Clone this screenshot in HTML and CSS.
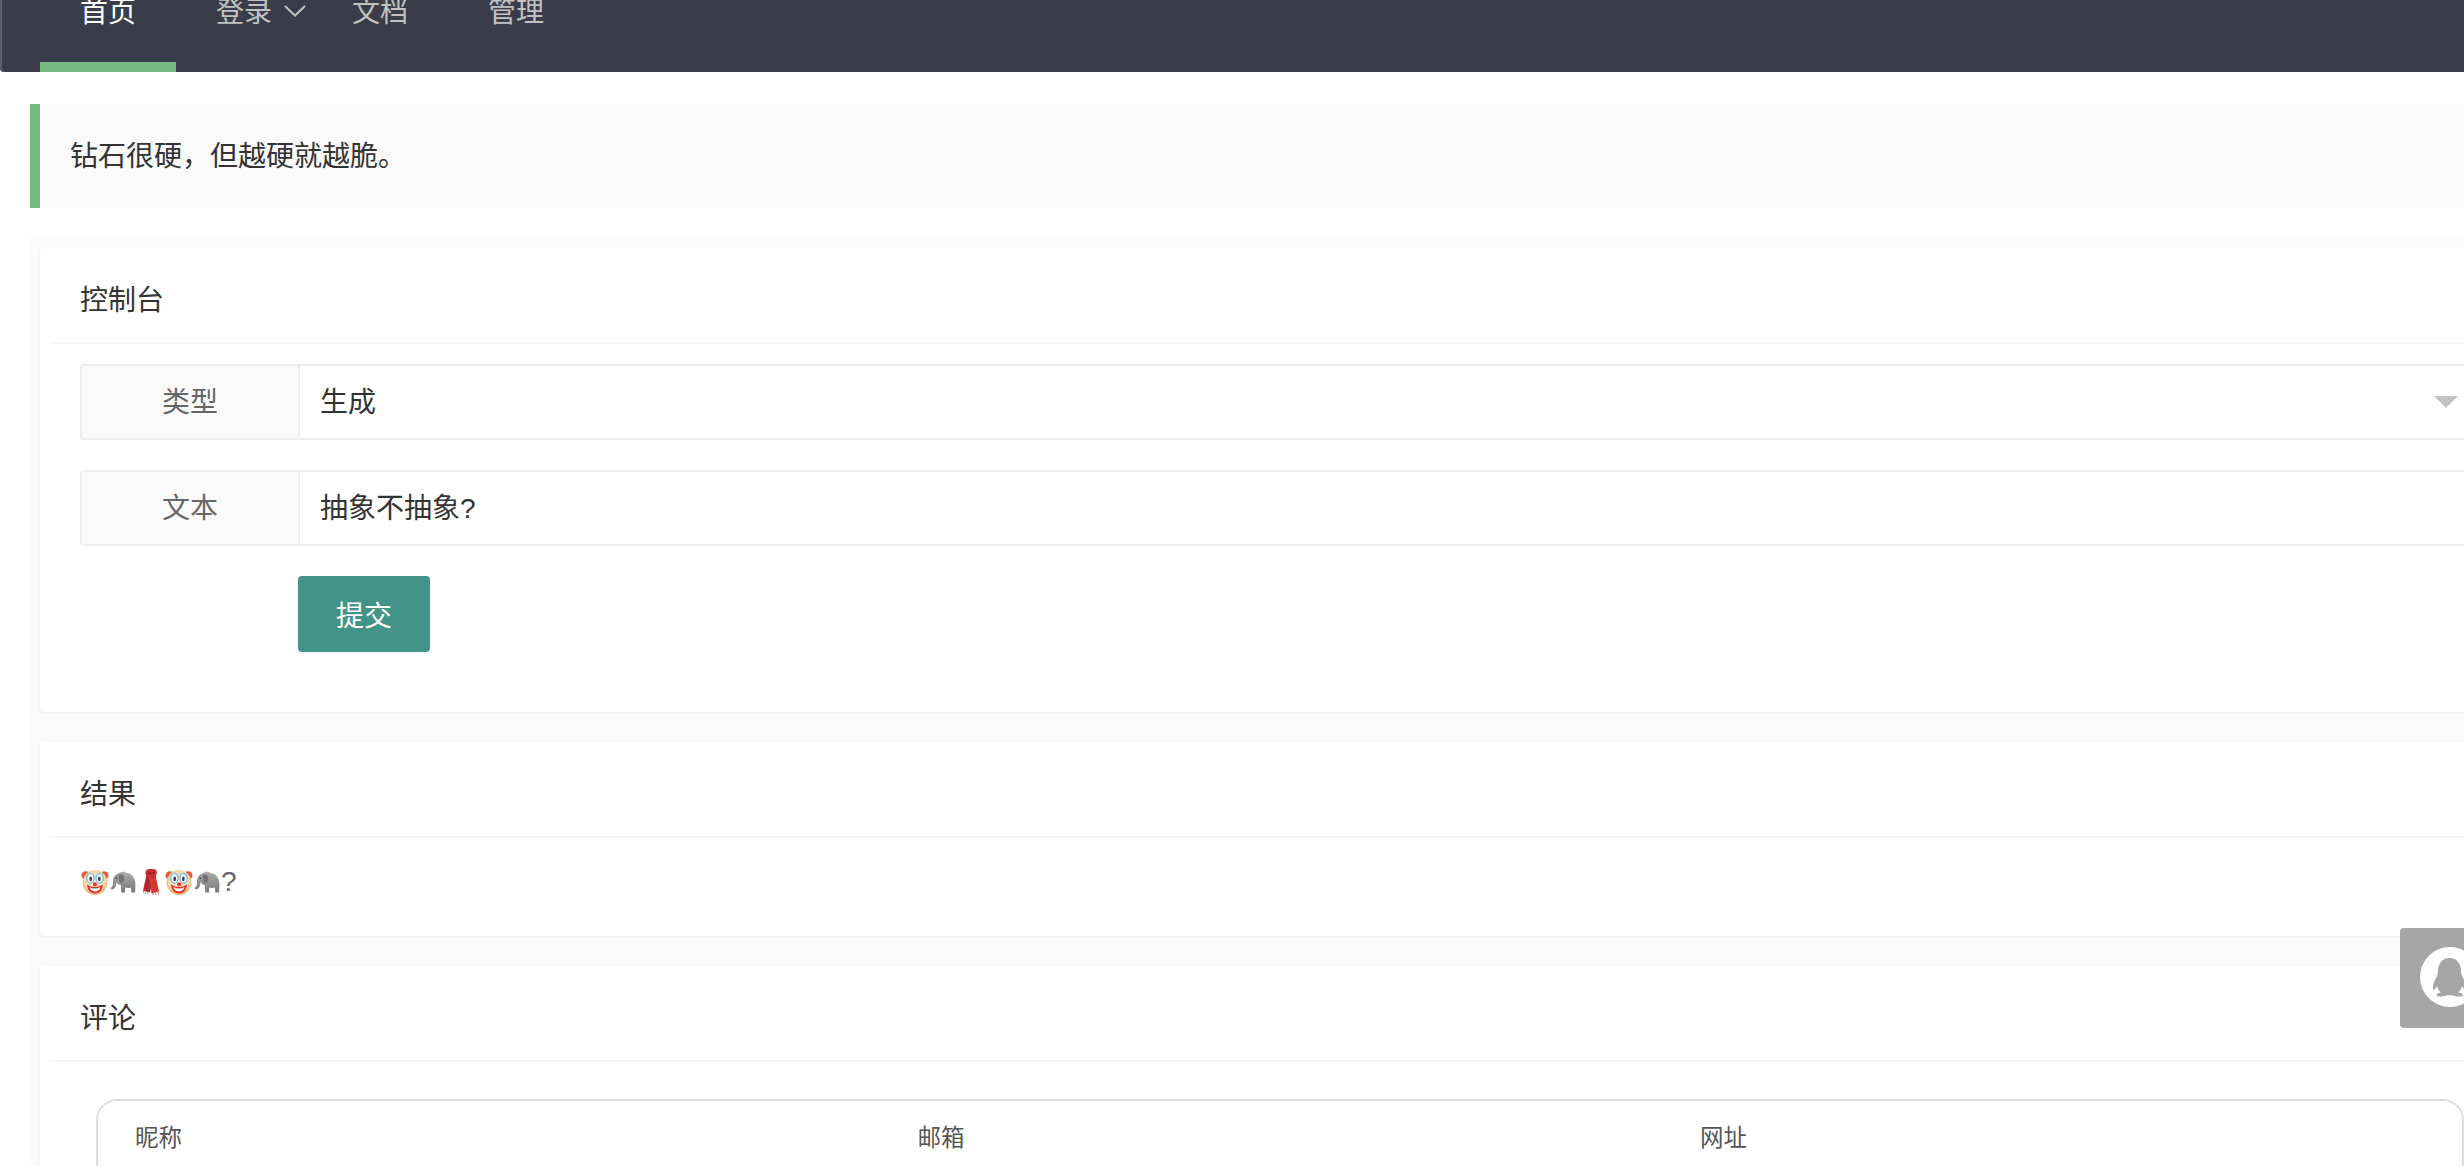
FILE: index.html
```html
<!DOCTYPE html>
<html lang="zh-CN">
<head>
  <meta charset="UTF-8">
  <title>抽象话</title>
  <link rel="stylesheet" href="styles.css">
</head>
<body>
  <svg class="emoji-defs" width="0" height="0" aria-hidden="true">
    <defs>
      <radialGradient id="clown-face" cx="50%" cy="45%" r="55%">
        <stop offset="0%" stop-color="#fcebcd"/>
        <stop offset="75%" stop-color="#f7d9a8"/>
        <stop offset="100%" stop-color="#dfae6e"/>
      </radialGradient>
      <linearGradient id="elephant-body" x1="0" y1="0" x2="0" y2="1">
        <stop offset="0%" stop-color="#adadad"/>
        <stop offset="100%" stop-color="#787878"/>
      </linearGradient>
      <symbol id="emoji-clown" viewBox="0 0 27 26">
        <circle cx="4.3" cy="6.500" r="4.300" fill="#ea5a3c"/>
        <circle cx="22.700" cy="6.500" r="4.300" fill="#ea5a3c"/>
        <circle cx="13.500" cy="13.500" r="12.400" fill="url(#clown-face)"/>
        <ellipse cx="8.900" cy="9.200" rx="3.600" ry="4.900" fill="#fff" stroke="#76b5e2" stroke-width="1.300"/>
        <ellipse cx="18.100" cy="9.200" rx="3.600" ry="4.900" fill="#fff" stroke="#76b5e2" stroke-width="1.300"/>
        <ellipse cx="9.200" cy="9.900" rx="1.400" ry="2.300" fill="#34465c"/>
        <ellipse cx="17.800" cy="9.900" rx="1.400" ry="2.300" fill="#34465c"/>
        <path d="M5.500 15.500Q13.500 20.500 21.500 15.500Q21 24.400 13.500 24.400Q6 24.400 5.500 15.500Z" fill="#e4322b"/>
        <path d="M8 18Q13.500 21 19 18Q18 22.400 13.500 22.400Q9 22.400 8 18Z" fill="#fff"/>
        <circle cx="13.500" cy="15.200" r="2" fill="#e4322b"/>
      </symbol>
      <symbol id="emoji-elephant" viewBox="0 0 26 24">
        <path d="M9 3C12 1 15 1.600 16.500 3C20.500 3 24 6 25 11C25.600 14 25.500 18 25 22.500L21.300 22.500L20.800 17.500C19 18.300 17 18.200 15.300 17.600L15 22.500L11.300 22.500L10.800 15C9 15 7.300 14 6.600 12C6.300 15 5.500 18.300 3 19.200C1.500 19.600 .4 18.600 .8 17.400C3 17 3 14 3 11C3 7 5 4.200 9 3Z" fill="url(#elephant-body)"/>
        <path d="M8.500 5C11 3.400 14.300 4.800 14.300 8C14.300 11 12.600 13 10.300 13.200C9.200 11 8.400 8 8.500 5Z" fill="#727272"/>
        <circle cx="6.300" cy="8" r=".8" fill="#222"/>
      </symbol>
      <symbol id="emoji-scarf" viewBox="0 0 16 26">
        <path d="M3.500 6L10 8L7 23.500L0 21.500Z" fill="#b5242a"/>
        <path d="M6 8L12.500 6L16 22.500L8.500 24.500Z" fill="#cf3a36"/>
        <path d="M3.500 .8C6.500 -.4 10 -.4 13 .8C14.500 3.500 13.800 6.800 11.300 8.800C8.500 9.800 5.500 9.200 3.500 7.300C2 5 2 3 3.500 .8Z" fill="#c92f30"/>
        <path d="M4.500 3.300C7 4.800 10 4.800 12.500 3.300" fill="none" stroke="#8f1a20" stroke-width="1.100"/>
        <path d="M1 21.500L.6 24M3 22.300L2.700 25M5 23L4.800 25.500M10 24.200L10 26M12.500 23.800L12.800 26M15 23L15.600 25.500" fill="none" stroke="#d8605a" stroke-width=".9"/>
      </symbol>
    </defs>
  </svg>

  <div class="page">
    <div class="top-nav">
      <a class="nav-item active">首页</a>
      <a class="nav-item">登录
        <svg class="nav-more" viewBox="0 0 22 12" width="22" height="12">
          <path d="M1 1L11 10.500L21 1" fill="none" stroke="#c2c2c2" stroke-width="2"/>
        </svg>
      </a>
      <a class="nav-item">文档</a>
      <a class="nav-item">管理</a>
    </div>

    <blockquote class="quote">钻石很硬，但越硬就越脆。</blockquote>

    <div class="panel">
      <div class="card">
        <div class="card-header">控制台</div>
        <div class="card-body form-body">
          <div class="form-row">
            <div class="form-label">类型</div>
            <div class="form-input">
              生成
              <span class="select-arrow"></span>
            </div>
          </div>
          <div class="form-row">
            <div class="form-label">文本</div>
            <div class="form-input">抽象不抽象?</div>
          </div>
          <button class="button">提交</button>
        </div>
      </div>

      <div class="card">
        <div class="card-header">结果</div>
        <div class="card-body result-body">
          <svg class="emoji" width="27" height="26" role="img" aria-label="🤡"><use href="#emoji-clown"/></svg>
          <svg class="emoji" width="26" height="24" role="img" aria-label="🐘"><use href="#emoji-elephant"/></svg>
          <svg class="emoji" width="16" height="26" role="img" aria-label="🧣"><use href="#emoji-scarf"/></svg>
          <svg class="emoji" width="27" height="26" role="img" aria-label="🤡"><use href="#emoji-clown"/></svg>
          <svg class="emoji" width="26" height="24" role="img" aria-label="🐘"><use href="#emoji-elephant"/></svg>
          <span>?</span>
        </div>
      </div>

      <div class="card">
        <div class="card-header">评论</div>
        <div class="card-body comment-body">
          <div class="comment-box">
            <div class="comment-fields">
              <span>昵称</span>
              <span>邮箱</span>
              <span>网址</span>
            </div>
          </div>
        </div>
      </div>
    </div>
  </div>

  <div class="qq-float">
    <svg viewBox="0 0 100 100" width="100" height="100">
      <circle cx="50" cy="49" r="30" fill="#fff"/>
      <path d="M49.500 30C42 30 38 36 38 43C38 46 37 48 36 50C34 53 32.500 57 33 61C34 63 36 60 37 58C37.500 61 39 63 41 64.500C38 65 36 66 36.500 67.500C37.500 69 43 69 46 67.500C47.500 67 51.500 67 53 67.500C56 69 62 69 63 67.500C63.500 66 61 65 58 64.500C60 63 61.500 61 62 58C63 60 65 63 66 61C66.500 57 65 53 63 50C62 48 61 46 61 43C61 36 57 30 49.500 30Z" fill="#a6a6a6"/>
    </svg>
  </div>
</body>
</html>
```

FILE: styles.css
```css
* {
  box-sizing: border-box;
}

html, body {
  height: 1166px;
  margin: 0;
  overflow: hidden;
  background-color: #fff;
}

body {
  font-family: 'Liberation Sans', 'Noto Sans CJK SC', sans-serif;
  font-size: 28px;
  color: #333;
}

.emoji-defs {
  position: absolute;
}

.page {
  width: 2531px;
}

.top-nav {
  display: flex;
  height: 72px;
  padding-left: 40px;
  background-color: #3a3d49;
  border-bottom-left-radius: 4px;
  box-shadow: inset 2px 0 0 #5d606b;
}

.nav-item {
  position: relative;
  width: 136px;
  height: 72px;
  padding-left: 40px;
  line-height: 26px;
  color: #c2c2c2;
}

.nav-item.active {
  color: #fff;
  border-bottom: 10px solid #74b87f;
}

.nav-more {
  position: absolute;
  left: 108px;
  top: 5px;
}

.quote {
  margin: 32px 0 30px 30px;
  height: 104px;
  padding-left: 30px;
  line-height: 106px;
  background-color: #fafafa;
  border-left: 10px solid #74b87f;
}

.panel {
  margin-left: 30px;
  padding: 10px;
  background-color: #fafafa;
}

.card {
  margin-bottom: 30px;
  background-color: #fff;
  border-radius: 4px;
  box-shadow: 0 1px 3px rgba(0, 0, 0, 0.06);
}

.card-header {
  margin: 0 10px;
  height: 96px;
  padding: 33px 0 0 30px;
  line-height: 40px;
  border-bottom: 2px solid #f6f6f6;
}

.form-body {
  height: 368px;
  padding: 20px 41px 0 40px;
}

.form-row {
  display: flex;
  height: 76px;
  margin-bottom: 30px;
  border: 2px solid #eee;
  border-radius: 3px;
  line-height: 74px;
}

.form-label {
  width: 218px;
  text-align: center;
  color: #666;
  background-color: #fafafa;
  border-right: 2px solid #eee;
}

.form-input {
  position: relative;
  flex: 1;
  padding-left: 20px;
}

.select-arrow {
  position: absolute;
  right: 20px;
  top: 30px;
  border-style: solid;
  border-width: 12px 12px 0;
  border-color: #c2c2c2 transparent transparent;
}

.button {
  display: block;
  width: 132px;
  height: 76px;
  margin-left: 218px;
  padding: 0;
  border: none;
  border-radius: 4px;
  font-family: inherit;
  font-size: 28px;
  color: #fff;
  background-color: #439488;
}

.result-body {
  display: flex;
  align-items: center;
  height: 98px;
  padding: 0 0 10px 41px;
  color: #666;
}

.emoji {
  width: 28px;
  flex-shrink: 0;
}

.comment-body {
  padding: 37px 57px 0 56px;
}

.comment-box {
  height: 300px;
  border: 2px solid #ddd;
  border-radius: 21px;
}

.comment-fields {
  display: grid;
  grid-template-columns: repeat(3, 782.5px);
  padding: 17px 0 0 37px;
  font-size: 23.5px;
  line-height: 40px;
  color: #555;
}

.qq-float {
  position: fixed;
  top: 928px;
  right: -36px;
  width: 100px;
  height: 100px;
  background-color: #a6a6a6;
  border-radius: 4px;
}
```
